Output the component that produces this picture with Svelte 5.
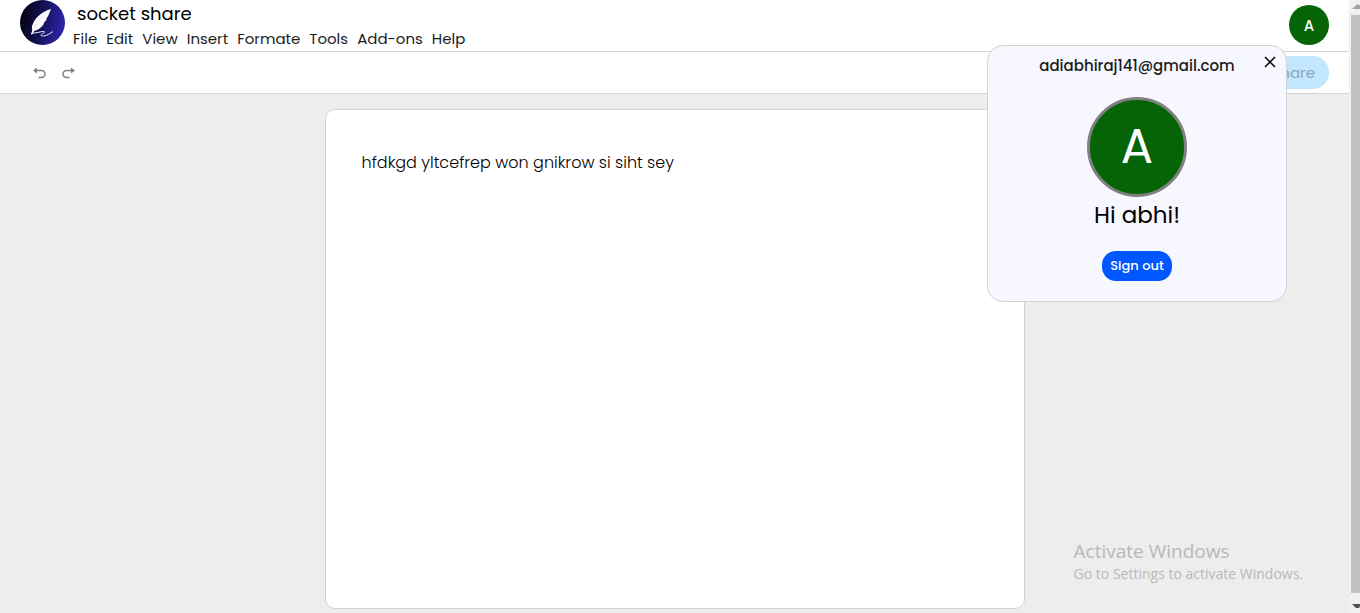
<script>
  const menus = ['File', 'Edit', 'View', 'Insert', 'Formate', 'Tools', 'Add-ons', 'Help'];
  let title = 'socket share';
  let content = 'hfdkgd yltcefrep won gnikrow si siht sey';
  let accountOpen = true;
</script>

<div class="shell">
  <div class="app">
    <header>
      <svg class="logo" viewBox="0 0 45 45" role="img" aria-label="Quill">
        <defs>
          <linearGradient id="ink" x1="0" y1="0.4" x2="1" y2="0.6">
            <stop offset="0" stop-color="#02010f" />
            <stop offset="0.5" stop-color="#15135a" />
            <stop offset="1" stop-color="#2e27b0" />
          </linearGradient>
        </defs>
        <circle cx="22.5" cy="22.5" r="22.5" fill="url(#ink)" />
        <path d="M31 9C24 11 17.500 15.500 14 21.500C11.800 25.500 11.500 28 12.200 30.500L11 34.200L12 34.500L14.200 31C18 30.300 22 27 24.300 23.300L23.300 23.500L27 19.300L26 19.200C28.700 16 29.500 12.500 31 9Z" fill="#fff" />
        <path d="M14 28.500C17 23 21 18 26 13.500" fill="none" stroke="#c8c8e0" stroke-width=".5" />
        <path d="M11.500 33.500L20 32C24 31 26 31.500 23.500 33C20.500 34.700 20 36.200 23.500 36C27.500 35.600 29.500 33.500 32.500 31.800" fill="none" stroke="#ececff" stroke-width="1" stroke-linecap="round" />
      </svg>
      <div class="heading">
        <h1>{title}</h1>
        <nav aria-label="Document menu">
          {#each menus as item}
            <button type="button">{item}</button>
          {/each}
        </nav>
      </div>
      <button class="avatar" type="button" aria-label="Account" on:click={() => (accountOpen = !accountOpen)}>A</button>
    </header>

    <div class="toolbar">
      <div class="history">
        <button type="button" aria-label="Undo">
          <svg viewBox="0 0 15 12"><path d="M4 3.500H9.500A3.500 3.500 0 0 1 9.500 10.500H6.500" /><path class="tip" d="M1 3.500L5 .5V6.500Z" /></svg>
        </button>
        <button type="button" aria-label="Redo">
          <svg viewBox="0 0 15 12"><path d="M11 3.500H5.500A3.500 3.500 0 0 0 5.500 10.500H8.500" /><path class="tip" d="M14 3.500L10 .5V6.500Z" /></svg>
        </button>
      </div>
      <button class="share" type="button" disabled>Share</button>
    </div>

    <main>
      <textarea class="paper" aria-label="Document text" spellcheck="false" bind:value={content}></textarea>
    </main>

    {#if accountOpen}
      <section class="account" aria-label="Account details">
        <button class="close" type="button" aria-label="Close" on:click={() => (accountOpen = false)}>
          <svg viewBox="0 0 12 12"><path d="M1 1L11 11M11 1L1 11" /></svg>
        </button>
        <p class="email">adiabhiraj141@gmail.com</p>
        <div class="portrait">A</div>
        <p class="greeting">Hi abhi!</p>
        <button class="signout" type="button">Sign out</button>
      </section>
    {/if}

    <div class="notice">
      <p class="notice-title">Activate Windows</p>
      <p>Go to Settings to activate Windows.</p>
    </div>
  </div>

  <div class="scrollbar" aria-hidden="true">
    <svg viewBox="0 0 11 15"><path d="M3 9H11V5.500L10 4.500H8Z" fill="#a3a3a3" /></svg>
    <div class="thumb"></div>
    <svg viewBox="0 0 11 15"><path d="M3 6H11V8L10 10H7Z" fill="#505050" /></svg>
  </div>
</div>

<style>
  :global(body) {
    margin: 0;
    background: #ededed;
  }

  .shell {
    display: grid;
    grid-template-columns: minmax(0, 1fr) 11px;
    min-height: 100vh;
    font-family: Poppins, Inter, "Open Sans", sans-serif;
    color: #000;
  }

  .shell * {
    box-sizing: border-box;
  }

  .app {
    position: relative;
    display: flex;
    flex-direction: column;
  }

  h1,
  p {
    margin: 0;
    font-weight: 400;
  }

  button {
    padding: 0;
    border: 0;
    background: none;
    color: inherit;
    font: inherit;
    cursor: pointer;
  }

  header {
    display: flex;
    gap: 8px;
    padding: 0 20px 2px;
    background: #fff;
    border-bottom: 1px solid #d3d3d3;
  }

  .logo {
    width: 45px;
    height: 45px;
  }

  .heading {
    flex: 1;
  }

  h1 {
    padding-left: 4px;
    font-size: 18px;
    line-height: 28px;
  }

  nav {
    display: flex;
    gap: 9px;
    font-size: 15px;
    line-height: 21px;
    color: #1c1c1c;
  }

  .avatar {
    width: 40px;
    height: 40px;
    margin-top: 5px;
    border-radius: 50%;
    background: #056405;
    color: #fff;
    font-size: 15px;
    font-weight: 500;
  }

  .toolbar {
    display: flex;
    align-items: center;
    justify-content: space-between;
    padding: 4px 20px 4px 32px;
    background: #fff;
    border-bottom: 1px solid #d3d3d3;
  }

  .history {
    display: flex;
    gap: 14px;
  }

  .history button {
    display: flex;
  }

  .history svg {
    width: 15px;
    height: 12px;
    fill: none;
    stroke: #808080;
    stroke-width: 1.5px;
  }

  .history .tip {
    fill: #808080;
    stroke: none;
  }

  .share {
    padding: 0 14px;
    border-radius: 16px;
    background: #c2e7ff;
    color: #8ba6b8;
    font-size: 15px;
    line-height: 33px;
  }

  main {
    flex: 1;
    display: flex;
    justify-content: center;
    padding: 15px 20px 4px;
    background: #ededed;
  }

  .paper {
    flex: 0 1 700px;
    min-width: 0;
    min-height: 500px;
    padding: 41px 36px;
    border: 1px solid #d3d3d3;
    border-radius: 10px;
    outline: 0;
    background: #fff;
    color: #000;
    font-family: inherit;
    font-size: 16px;
    font-weight: 300;
    line-height: 24px;
    resize: none;
  }

  .account {
    position: absolute;
    top: 45px;
    right: 62px;
    display: flex;
    flex-direction: column;
    align-items: center;
    width: 300px;
    padding: 8px 16px 20px;
    border: 1px solid #d3d3d3;
    border-radius: 16px;
    background: #f7f7ff;
  }

  .close {
    position: absolute;
    top: 10px;
    right: 10px;
    display: flex;
  }

  .close svg {
    width: 12px;
    height: 12px;
    fill: none;
    stroke: #000;
    stroke-width: 1.5px;
  }

  .email {
    color: #1c1c1c;
    font-size: 15px;
    font-weight: 500;
    line-height: 24px;
  }

  .portrait {
    display: grid;
    place-items: center;
    width: 100px;
    height: 100px;
    margin-top: 19px;
    border: 3px solid #808080;
    border-radius: 50%;
    background: #056405;
    color: #fff;
    font-size: 48px;
    line-height: 94px;
  }

  .greeting {
    font-size: 23px;
    line-height: 36px;
  }

  .signout {
    margin-top: 18px;
    padding: 0 8px;
    border-radius: 14px;
    background: #0057ff;
    color: #fff;
    font-size: 13px;
    font-weight: 500;
    line-height: 30px;
  }

  .notice {
    position: absolute;
    right: 46px;
    bottom: 29px;
    color: #b8b8b8;
    font-family: "Segoe UI", "Open Sans", sans-serif;
    font-size: 14px;
    font-weight: 300;
    line-height: 20px;
    pointer-events: none;
  }

  .notice-title {
    font-size: 19px;
    line-height: 26px;
  }

  .scrollbar {
    position: sticky;
    top: 0;
    display: flex;
    flex-direction: column;
    height: 100vh;
    background: #f1f1f1;
  }

  .scrollbar svg {
    width: 11px;
    height: 15px;
  }

  .thumb {
    flex: 1;
    margin: 0 0 5px 2px;
    background: #c1c1c1;
  }
</style>
